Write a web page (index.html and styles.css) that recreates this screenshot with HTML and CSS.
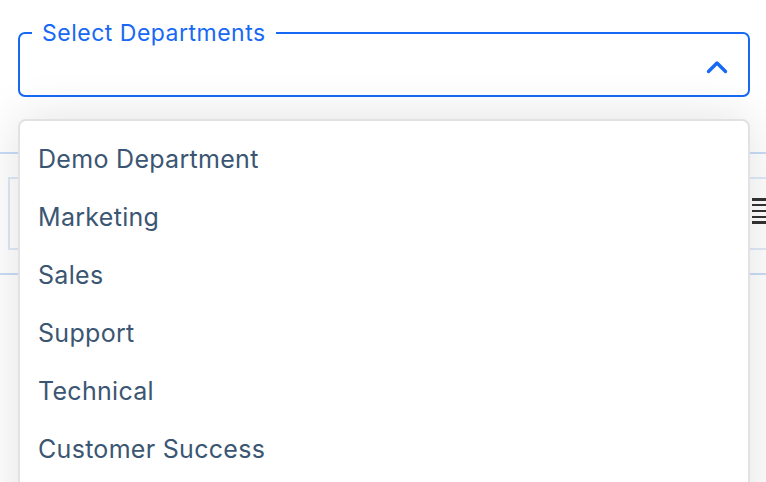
FILE: index.html
```html
<!DOCTYPE html>
<html lang="en">
<head>
  <meta charset="UTF-8">
  <meta name="viewport" content="width=device-width, initial-scale=1">
  <title>Select Departments</title>
  <link rel="stylesheet" href="styles.css">
</head>
<body>
  <main class="page">
    <fieldset class="picker">
      <legend>Select Departments</legend>
      <svg class="chevron" width="22" height="14" viewBox="0 0 22 14"><path d="M2.5 11.5 L11 3 L19.5 11.5" fill="none" stroke="#1769f5" stroke-width="3.4" stroke-linecap="round" stroke-linejoin="round"/></svg>
    </fieldset>

    <div class="grid">
      <div class="row head"></div>
      <div class="row body">
        <span class="menu-icon"><i></i><i></i><i></i><i></i><i></i></span>
      </div>
      <div class="row foot"></div>
    </div>

    <ul class="dropdown">
      <li>Demo Department</li>
      <li>Marketing</li>
      <li>Sales</li>
      <li>Support</li>
      <li>Technical</li>
      <li>Customer Success</li>
    </ul>
  </main>
</body>
</html>
```

FILE: styles.css
```css
* { margin:0; padding:0; box-sizing:border-box; }
html, body { height:100%; overflow:hidden; }
body { font-family:Inter,"Noto Sans",Arial,sans-serif; background:#fff; color:#3b5672; }

.page { position:relative; padding-top:20px; height:100%; }

.picker { margin:0 16px 0 18px; height:77px; border:2px solid #1769f5; border-radius:7px;
          padding:0 20px 0 12px; display:flex; align-items:center; justify-content:flex-end; }
.picker legend { padding:0 10px; font-size:23px; letter-spacing:.5px; color:#1769f5; line-height:26px; }
.chevron { margin-top:-8px; }

.grid { margin-top:55px; border-top:2px solid #cadcf6; border-bottom:2px solid #cadcf6; }
.row { height:23px; }
.row.body { height:73px; border-top:2px solid #dfe9f8; border-bottom:2px solid #dfe9f8;
            margin-left:8px; border-left:2px solid #dfe9f8; display:flex; justify-content:flex-end;
            align-items:center; }
.menu-icon { display:flex; flex-direction:column; gap:3.6px; width:14px; margin-bottom:5px; }
.menu-icon i { display:block; height:2.2px; background:#333; }

.dropdown { position:absolute; top:119px; left:18px; right:16px; height:420px; list-style:none;
            background:#fff; border:2px solid #e2e2e2; border-radius:8px;
            box-shadow:0 0 50px rgba(0,0,0,.12); padding-top:9px; }
.dropdown li { height:58px; line-height:58px; padding-left:18px; font-size:25px; letter-spacing:.3px;
               color:#3b5672; }
```
